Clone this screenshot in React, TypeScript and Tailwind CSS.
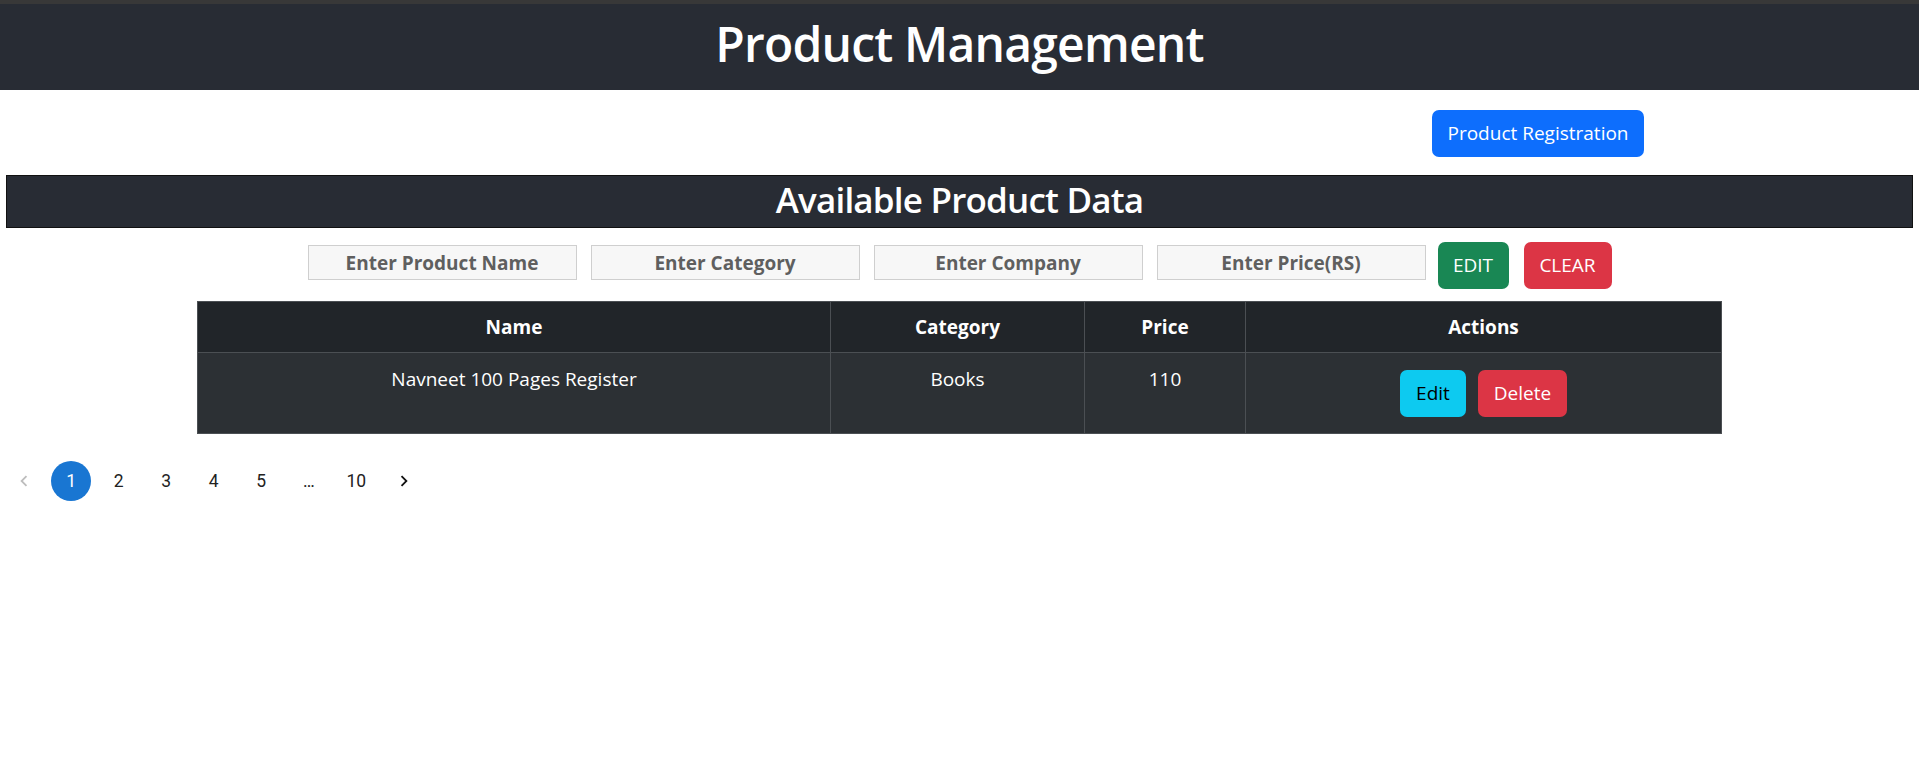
import React from "react";

const font = { fontFamily: '"Open Sans", "Noto Sans", sans-serif' };

function PlaceholderInput({ text }: { text: string }) {
  return (
    <input
      placeholder={text}
      className="mt-[3px] w-[269px] h-[35px] border border-[#cfcfcf] bg-[#f7f7f7] text-center text-[19px] font-bold placeholder:text-[#5f5f5f] outline-none"
      style={font}
    />
  );
}

export default function App() {
  const pages = ["1", "2", "3", "4", "5", "…", "10"];
  return (
    <div className="w-[1919px] min-h-[764px] bg-white" style={font}>
      <div className="h-[4px] bg-[#383838]" />
      <header className="h-[86px] bg-[#282c34] flex items-center justify-center">
        <h1 className="text-white text-[48px] font-semibold leading-none tracking-[-0.8px] pb-[6px]">
          Product Management
        </h1>
      </header>

      <div className="flex justify-end pr-[275px] pt-[20px]">
        <button className="w-[212px] h-[47px] rounded-[7px] bg-[#0d6efd] text-white text-[19px]">
          Product Registration
        </button>
      </div>

      <div className="mx-[6px] mt-[18px] h-[53px] border border-[#111] bg-[#282c34] flex items-center justify-center">
        <h2 className="text-white text-[35px] font-semibold leading-none tracking-[-0.8px] pb-[5px]">
          Available Product Data
        </h2>
      </div>

      <div className="flex items-start justify-center mt-[14px]">
        <div className="flex items-start gap-[14px]">
          <PlaceholderInput text="Enter Product Name" />
          <PlaceholderInput text="Enter Category" />
          <PlaceholderInput text="Enter Company" />
          <PlaceholderInput text="Enter Price(RS)" />
        </div>
        <button className="ml-[12px] w-[71px] h-[47px] rounded-[7px] bg-[#198754] text-white text-[19px]">
          EDIT
        </button>
        <button className="ml-[15px] w-[88px] h-[47px] rounded-[7px] bg-[#dc3545] text-white text-[19px]">
          CLEAR
        </button>
      </div>

      <table className="mx-auto mt-[12px] w-[1525px] border-collapse border border-[#4b4f53] text-white text-[19px]">
        <thead>
          <tr className="bg-[#212529] h-[51px]">
            <th className="w-[633px] border border-[#4b4f53] font-bold">Name</th>
            <th className="w-[254px] border border-[#4b4f53] font-bold">Category</th>
            <th className="w-[161px] border border-[#4b4f53] font-bold">Price</th>
            <th className="border border-[#4b4f53] font-bold">Actions</th>
          </tr>
        </thead>
        <tbody>
          <tr className="bg-[#2c3034] h-[81px]">
            <td className="border border-[#4b4f53] text-center align-top pt-[12px]">Navneet 100 Pages Register</td>
            <td className="border border-[#4b4f53] text-center align-top pt-[12px]">Books</td>
            <td className="border border-[#4b4f53] text-center align-top pt-[12px]">110</td>
            <td className="border border-[#4b4f53] text-center align-top pt-[17px]">
              <div className="flex justify-center gap-[12px]">
                <button className="w-[66px] h-[47px] rounded-[7px] bg-[#0dcaf0] text-black text-[19px]">Edit</button>
                <button className="w-[89px] h-[47px] rounded-[7px] bg-[#dc3545] text-white text-[19px]">Delete</button>
              </div>
            </td>
          </tr>
        </tbody>
      </table>

      <nav className="mt-[27px] flex items-center" style={{ fontFamily: "Roboto, sans-serif" }}>
        <div className="mx-[3.75px] w-[40px] h-[40px] flex items-center justify-center text-[#bdbdbd]">
          <svg width="22" height="22" viewBox="0 0 24 24" fill="currentColor">
            <path d="M15.41 7.41 14 6l-6 6 6 6 1.41-1.41L10.83 12z" />
          </svg>
        </div>
        {pages.map((p) => (
          <div
            key={p}
            className={
              "mx-[3.75px] min-w-[40px] h-[40px] px-[7px] rounded-full flex items-center justify-center text-[17.5px] " +
              (p === "1" ? "bg-[#1976d2] text-white" : "text-[#222]")
            }
          >
            {p}
          </div>
        ))}
        <div className="mx-[3.75px] w-[40px] h-[40px] flex items-center justify-center text-[#111]">
          <svg width="22" height="22" viewBox="0 0 24 24" fill="currentColor">
            <path d="M10 6 8.59 7.41 13.17 12l-4.58 4.59L10 18l6-6z" />
          </svg>
        </div>
      </nav>
    </div>
  );
}
